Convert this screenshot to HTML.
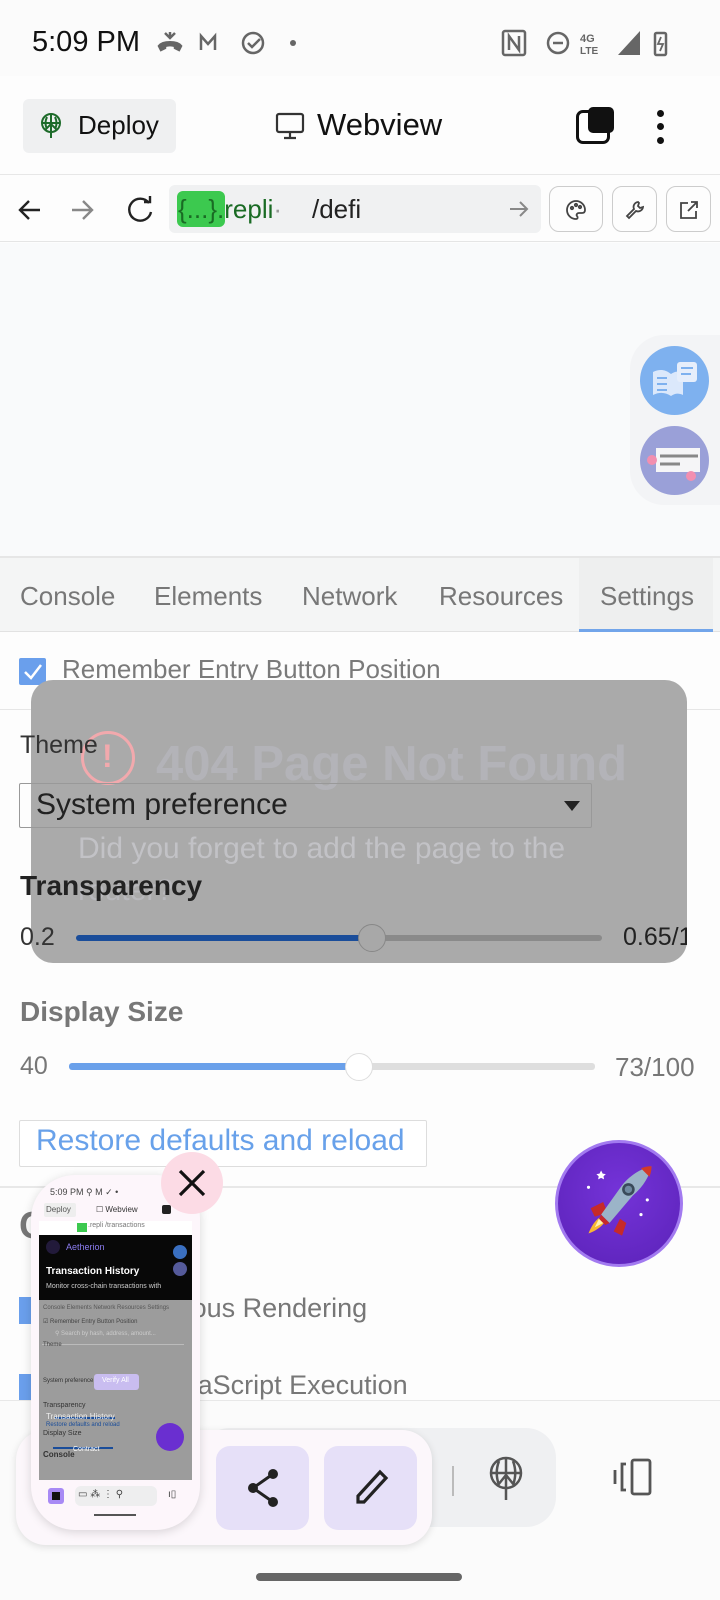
<!DOCTYPE html>
<html><head><meta charset="utf-8"><style>
*{box-sizing:border-box;margin:0;padding:0}
body{width:720px;height:1600px;position:relative;overflow:hidden;background:#fdfdfd;font-family:"Liberation Sans",sans-serif}
.a{position:absolute}
.t{position:absolute;white-space:nowrap}
</style></head><body>
<!-- status bar -->
<div class="a" style="left:0;top:0;width:720px;height:76px;background:#fbfbfb"></div>
<div class="t" style="left:32px;top:26px;font-size:29px;color:#111">5:09 PM</div>
<svg class="a" style="left:156px;top:28px" width="145" height="30" viewBox="0 0 145 30" fill="none" stroke="#666" stroke-width="2.5">
<path d="M3 18c4-5 18-5 22 0l-2 4-4-2v-2c-3-1-7-1-10 0v2l-4 2z" fill="#666"/><path d="M9 5l5 5 5-5M14 10V4"/>
<path d="M45 22V8l7 8 7-8v14"/>
<circle cx="97" cy="15" r="10"/><path d="M92 15l4 4 8-8"/>
<circle cx="137" cy="15" r="3" fill="#666" stroke="none"/></svg>
<svg class="a" style="left:500px;top:28px" width="175" height="30" viewBox="0 0 175 30" fill="none" stroke="#666" stroke-width="2.5">
<rect x="3" y="3" width="22" height="24" rx="2"/><path d="M9 22V8l10 14V8"/>
<circle cx="58" cy="15" r="10"/><path d="M53 15h10"/>
<text x="80" y="14" font-size="11" fill="#666" stroke="none" font-family="Liberation Sans" font-weight="bold">4G</text>
<text x="80" y="26" font-size="10" fill="#666" stroke="none" font-family="Liberation Sans" font-weight="bold">LTE</text>
<path d="M118 27L140 3v24z" fill="#666" stroke="none"/>
<rect x="155" y="5" width="11" height="22" rx="1.5"/><path d="M161 9l-3 7h5l-3 7" stroke-width="1.8"/></svg>
<!-- header -->
<div class="a" style="left:0;top:76px;width:720px;height:99px;background:#fdfdfd;border-bottom:1px solid #e7e7e7"></div>
<div class="a" style="left:23px;top:99px;width:153px;height:54px;background:#eff0f1;border-radius:6px"></div>
<svg class="a" style="left:38px;top:112px" width="26" height="28" viewBox="0 0 26 28" fill="none" stroke="#1d6b2a" stroke-width="2"><circle cx="13" cy="11" r="9"/><path d="M4 11h18M13 2v24M7 18l6-6 6 6M9 5c-2 4-2 8 0 12M17 5c2 4 2 8 0 12"/></svg>
<div class="t" style="left:78px;top:110px;font-size:26px;color:#111">Deploy</div>
<svg class="a" style="left:275px;top:112px" width="30" height="28" viewBox="0 0 30 28" fill="none" stroke="#333" stroke-width="2.2"><rect x="2" y="2" width="26" height="18" rx="2"/><path d="M15 20v5M9 26h12"/></svg>
<div class="t" style="left:317px;top:107px;font-size:31px;color:#111">Webview</div>
<div class="a" style="left:576px;top:110px;width:34px;height:34px;border:3px solid #111;border-radius:7px;background:#fff"></div>
<div class="a" style="left:588px;top:107px;width:26px;height:26px;background:#111;border-radius:5px"></div>
<div class="a" style="left:657px;top:110px;width:7px;height:7px;border-radius:50%;background:#111"></div>
<div class="a" style="left:657px;top:123px;width:7px;height:7px;border-radius:50%;background:#111"></div>
<div class="a" style="left:657px;top:137px;width:7px;height:7px;border-radius:50%;background:#111"></div>
<!-- url bar -->
<div class="a" style="left:0;top:176px;width:720px;height:66px;background:#fdfdfd;border-bottom:1px solid #e5e5e5"></div>
<svg class="a" style="left:16px;top:196px" width="140" height="28" viewBox="0 0 140 28" fill="none" stroke-width="2.4"><path d="M24 14H4M13 5l-9 9 9 9" stroke="#222"/><path d="M56 14h20M67 5l9 9-9 9" stroke="#888"/><path d="M133 7a11 11 0 1 0 2 9" stroke="#222"/><path d="M128 6h6V0" stroke="#222"/></svg>
<div class="a" style="left:169px;top:185px;width:372px;height:48px;background:#f0f1f2;border-radius:6px"></div>
<div class="a" style="left:177px;top:191px;width:48px;height:36px;background:#3cc94f;border-radius:6px"></div>
<div class="t" style="left:178px;top:194px;font-size:26px;color:#1a6b24">{...}<span>.repli</span><span style="color:#999">·</span></div>
<div class="t" style="left:312px;top:194px;font-size:26px;color:#222">/defi</div>
<svg class="a" style="left:508px;top:200px" width="22" height="18" viewBox="0 0 22 18" fill="none" stroke="#888" stroke-width="2"><path d="M2 9h17M12 2l7 7-7 7"/></svg>
<div class="a" style="left:549px;top:186px;width:54px;height:46px;border:1px solid #ccc;border-radius:10px"></div>
<div class="a" style="left:612px;top:186px;width:45px;height:46px;border:1px solid #ccc;border-radius:10px"></div>
<div class="a" style="left:666px;top:186px;width:45px;height:46px;border:1px solid #ccc;border-radius:10px"></div>
<svg class="a" style="left:565px;top:199px" width="22" height="22" viewBox="0 0 22 22" fill="none" stroke="#444" stroke-width="1.8"><path d="M11 2a9 9 0 0 0 0 18c2 0 2-2 1-3s0-3 2-3h3c2 0 3-1 3-3 0-5-4-9-9-9z"/><circle cx="7" cy="9" r="1.2"/><circle cx="11" cy="6" r="1.2"/><circle cx="15" cy="8" r="1.2"/></svg>
<svg class="a" style="left:624px;top:199px" width="22" height="22" viewBox="0 0 22 22" fill="none" stroke="#444" stroke-width="1.8"><path d="M14 3a5 5 0 0 0-4 7L3 17l2 2 7-7a5 5 0 0 0 7-4l-3 1-2-2 1-3z"/></svg>
<svg class="a" style="left:678px;top:199px" width="22" height="22" viewBox="0 0 22 22" fill="none" stroke="#444" stroke-width="1.8"><path d="M10 4H3v15h15v-7M13 3h6v6M19 3l-9 9"/></svg>
<!-- webview -->
<div class="a" style="left:0;top:243px;width:720px;height:313px;background:#f9fafb"></div>
<div class="a" style="left:630px;top:335px;width:100px;height:170px;background:#f3f4f6;border-radius:34px 0 0 34px"></div>
<div class="a" style="left:640px;top:346px;width:69px;height:69px;border-radius:50%;background:#7eb1ef"></div>
<svg class="a" style="left:651px;top:360px" width="48" height="42" viewBox="0 0 48 42"><path d="M2 12c6-3 12-3 18 2v22c-6-4-12-4-18-1z" fill="#dbe8fb"/><path d="M20 14c4-3 8-3 12-1v22c-4-2-8-2-12 1z" fill="#dbe8fb"/><rect x="26" y="2" width="20" height="20" rx="3" fill="#e6eefb"/><path d="M30 8h12M30 14h10M6 18h10M6 24h10M6 30h10" stroke="#7eb1ef" stroke-width="2"/></svg>
<div class="a" style="left:640px;top:426px;width:69px;height:69px;border-radius:50%;background:#9aa0d8"></div>
<svg class="a" style="left:644px;top:446px" width="62" height="40" viewBox="0 0 62 40"><rect x="12" y="2" width="44" height="24" fill="#f5f5f7"/><path d="M16 10h38M16 18h20" stroke="#888" stroke-width="3"/><circle cx="8" cy="14" r="5" fill="#f28fb0"/><circle cx="47" cy="30" r="5" fill="#f28fb0"/></svg>
<!-- tabs -->
<div class="a" style="left:0;top:556px;width:720px;height:76px;background:#f4f5f5;border-top:2px solid #e6e6e6;border-bottom:1px solid #e2e2e2"></div>
<div class="a" style="left:579px;top:558px;width:134px;height:74px;background:#eeefef;border-bottom:3px solid #72a5ea"></div>
<div class="t" style="left:20px;top:581px;font-size:26px;color:#777">Console</div>
<div class="t" style="left:154px;top:581px;font-size:26px;color:#777">Elements</div>
<div class="t" style="left:302px;top:581px;font-size:26px;color:#777">Network</div>
<div class="t" style="left:439px;top:581px;font-size:26px;color:#777">Resources</div>
<div class="t" style="left:600px;top:581px;font-size:26px;color:#777">Settings</div>
<!-- settings -->
<div class="a" style="left:19px;top:658px;width:27px;height:27px;background:#6a9fec;border-radius:2px"></div>
<svg class="a" style="left:22px;top:662px" width="22" height="20" viewBox="0 0 22 20" fill="none" stroke="#fff" stroke-width="2.5"><path d="M3 10l6 6L19 3"/></svg>
<div class="t" style="left:62px;top:654px;font-size:26px;color:#7a7a7a">Remember Entry Button Position</div>
<div class="a" style="left:0;top:709px;width:720px;height:1px;background:#e6e6e6"></div>
<!-- overlay -->
<div class="a" style="left:31px;top:680px;width:656px;height:283px;background:#aaaaaa;border-radius:22px"></div>
<div class="a" style="left:81px;top:731px;width:54px;height:54px;border:3px solid #f2a9ad;border-radius:50%"></div>
<div class="t" style="left:102px;top:738px;font-size:32px;color:#f2a9ad;font-weight:bold">!</div>
<div class="t" style="left:156px;top:736px;font-size:49px;color:#b3b3b8;font-weight:bold">404 Page Not Found</div>
<div class="t" style="left:78px;top:832px;font-size:30px;color:#c2c2c6">Did you forget to add the page to the</div>
<div class="t" style="left:78px;top:874px;font-size:30px;color:#b8b8bc">router?</div>
<div class="t" style="left:20px;top:731px;font-size:25px;color:#333">Theme</div>
<div class="a" style="left:19px;top:783px;width:573px;height:45px;border:1px solid #999;border-radius:2px"></div>
<div class="t" style="left:36px;top:788px;font-size:30px;color:#222">System preference</div>
<svg class="a" style="left:563px;top:800px" width="18" height="12"><path d="M1 1h16L9 11z" fill="#222"/></svg>
<div class="t" style="left:20px;top:870px;font-size:28px;color:#222;font-weight:bold">Transparency</div>
<div class="t" style="left:20px;top:923px;font-size:25px;color:#333">0.2</div>
<div class="a" style="left:76px;top:935px;width:296px;height:6px;background:#1a4d9a;border-radius:3px"></div>
<div class="a" style="left:372px;top:935px;width:230px;height:6px;background:#8a8a8a;border-radius:3px"></div>
<div class="a" style="left:358px;top:924px;width:28px;height:28px;border-radius:50%;background:#a8a8a8;border:1px solid #888"></div>
<div class="a" style="left:623px;top:920px;width:64px;height:34px;overflow:hidden"><div class="t" style="left:0;top:3px;font-size:25px;color:#222">0.65/1</div></div>
<div class="t" style="left:20px;top:996px;font-size:28px;color:#777;font-weight:bold">Display Size</div>
<div class="t" style="left:20px;top:1052px;font-size:25px;color:#777">40</div>
<div class="a" style="left:69px;top:1063px;width:289px;height:7px;background:#6aa0ea;border-radius:3px"></div>
<div class="a" style="left:358px;top:1063px;width:237px;height:7px;background:#dedede;border-radius:3px"></div>
<div class="a" style="left:345px;top:1053px;width:28px;height:28px;border-radius:50%;background:#fff;border:1px solid #ddd"></div>
<div class="t" style="left:615px;top:1052px;font-size:26px;color:#777">73/100</div>
<div class="a" style="left:19px;top:1120px;width:408px;height:47px;border:1px solid #ddd;border-radius:2px;background:#fff"></div>
<div class="t" style="left:36px;top:1124px;font-size:30px;color:#68a1ea">Restore defaults and reload</div>
<div class="a" style="left:0;top:1186px;width:720px;height:2px;background:#e8e8e8"></div>
<div class="t" style="left:19px;top:1205px;font-size:38px;color:#777;font-weight:bold">Console</div>
<div class="a" style="left:19px;top:1297px;width:27px;height:27px;background:#6a9fec"></div>
<div class="t" style="left:64px;top:1293px;font-size:27px;color:#777">Asynchronous Rendering</div>
<div class="a" style="left:19px;top:1374px;width:27px;height:27px;background:#6a9fec"></div>
<div class="t" style="left:64px;top:1370px;font-size:27px;color:#777">Enable JavaScript Execution</div>
<div class="a" style="left:0;top:1400px;width:720px;height:200px;background:#fbfbfb;border-top:1px solid #e8e8e8"></div>
<!-- bottom nav -->
<div class="a" style="left:200px;top:1428px;width:356px;height:99px;background:#eff0f2;border-radius:30px"></div>
<div class="a" style="left:452px;top:1466px;width:2px;height:30px;background:#bbb"></div>
<svg class="a" style="left:486px;top:1455px" width="40" height="48" viewBox="0 0 40 48" fill="none" stroke="#555" stroke-width="2.5"><circle cx="20" cy="18" r="15"/><path d="M5 18h30M20 3v42M12 30l8-10 8 10M13 6c-3 8-3 16 0 24M27 6c3 8 3 16 0 24"/></svg>
<svg class="a" style="left:612px;top:1458px" width="46" height="40" viewBox="0 0 46 40" fill="none" stroke="#555" stroke-width="2.8"><path d="M3 12v14M14 6h-4v26h4"/><rect x="20" y="2" width="18" height="34" rx="2"/></svg>
<div class="a" style="left:16px;top:1430px;width:416px;height:115px;background:#fcf7fb;border-radius:30px;box-shadow:0 2px 8px rgba(0,0,0,.12)"></div>
<div class="a" style="left:216px;top:1446px;width:93px;height:84px;background:#e6e0f8;border-radius:14px"></div>
<div class="a" style="left:324px;top:1446px;width:93px;height:84px;background:#e6e0f8;border-radius:14px"></div>
<svg class="a" style="left:245px;top:1468px" width="36" height="40" viewBox="0 0 36 40"><path d="M28 6L8 20l20 14" stroke="#222" stroke-width="3" fill="none"/><circle cx="28" cy="6" r="5" fill="#222"/><circle cx="8" cy="20" r="5" fill="#222"/><circle cx="28" cy="34" r="5" fill="#222"/></svg>
<svg class="a" style="left:354px;top:1468px" width="36" height="40" viewBox="0 0 36 40" fill="none" stroke="#222" stroke-width="3.2"><path d="M26 4l6 6L10 34H4v-6z"/></svg>
<div class="a" style="left:256px;top:1573px;width:206px;height:8px;background:#666;border-radius:4px"></div>
<!-- thumbnail -->
<div class="a" style="left:31px;top:1175px;width:169px;height:355px;background:#fdf6fb;border-radius:44px;box-shadow:0 2px 10px rgba(0,0,0,.15)"></div>
<div class="t" style="left:50px;top:1187px;font-size:9px;color:#444">5:09 PM ⚲ M ✓ •</div>
<div class="a" style="left:44px;top:1203px;width:32px;height:14px;background:#eee;border-radius:2px;font-size:8px;color:#555;padding:2px">Deploy</div>
<div class="t" style="left:96px;top:1205px;font-size:8px;color:#333">☐ Webview</div>
<div class="a" style="left:162px;top:1205px;width:9px;height:9px;background:#222;border-radius:2px"></div>
<div class="a" style="left:39px;top:1221px;width:153px;height:14px;background:#fff"></div>
<div class="a" style="left:77px;top:1223px;width:10px;height:9px;background:#3cc94f"></div>
<div class="t" style="left:88px;top:1222px;font-size:7px;color:#777">.repli /transactions</div>
<div class="a" style="left:39px;top:1235px;width:153px;height:65px;background:#080808"></div>
<div class="t" style="left:66px;top:1242px;font-size:9px;color:#8b7cf0">Aetherion</div>
<div class="a" style="left:46px;top:1240px;width:14px;height:14px;border-radius:50%;background:#221a3a"></div>
<div class="a" style="left:173px;top:1245px;width:14px;height:14px;border-radius:50%;background:#3a6fc0"></div>
<div class="a" style="left:173px;top:1262px;width:14px;height:14px;border-radius:50%;background:#555a9a"></div>
<div class="t" style="left:46px;top:1266px;font-size:10px;color:#fff;font-weight:bold">Transaction History</div>
<div class="t" style="left:46px;top:1283px;font-size:7px;color:#ccc">Monitor cross-chain transactions with</div>
<div class="a" style="left:39px;top:1300px;width:153px;height:180px;background:#9c9c9c"></div>
<div class="a" style="left:42px;top:1344px;width:142px;height:1px;background:#bbb"></div>
<div class="t" style="left:43px;top:1305px;font-size:6px;color:#555">Console  Elements  Network  Resources  Settings</div>
<div class="t" style="left:43px;top:1318px;font-size:6px;color:#444">☑ Remember Entry Button Position</div>
<div class="t" style="left:55px;top:1330px;font-size:6px;color:#ccc">⚲ Search by hash, address, amount...</div>
<div class="t" style="left:43px;top:1342px;font-size:6px;color:#444">Theme</div>
<div class="t" style="left:43px;top:1378px;font-size:6px;color:#333">System preference</div>
<div class="a" style="left:94px;top:1374px;width:45px;height:16px;background:#c9bdf0;border-radius:3px;font-size:7px;color:#fff;padding:3px 0 0 8px">Verify All</div>
<div class="t" style="left:43px;top:1402px;font-size:7px;color:#333">Transparency</div>
<div class="a" style="left:55px;top:1417px;width:60px;height:2px;background:#1a4d9a"></div>
<div class="t" style="left:46px;top:1412px;font-size:8px;color:#eee">Transaction History</div>
<div class="t" style="left:43px;top:1430px;font-size:7px;color:#333">Display Size</div>
<div class="a" style="left:53px;top:1447px;width:60px;height:2px;background:#1a4d9a"></div>
<div class="t" style="left:46px;top:1422px;font-size:6px;color:#1a4d9a">Restore defaults and reload</div>
<div class="a" style="left:156px;top:1423px;width:28px;height:28px;border-radius:50%;background:#6a2fd0"></div>
<div class="t" style="left:43px;top:1450px;font-size:8px;color:#333;font-weight:bold">Console</div>
<div class="t" style="left:73px;top:1446px;font-size:7px;color:#fff">Contract</div>
<div class="a" style="left:48px;top:1488px;width:16px;height:16px;background:#a88af5;border-radius:3px"></div>
<div class="a" style="left:52px;top:1492px;width:8px;height:8px;background:#111"></div>
<div class="a" style="left:75px;top:1486px;width:82px;height:20px;background:#eeeeef;border-radius:6px"></div>
<div class="t" style="left:78px;top:1489px;font-size:10px;color:#444">▭ ⁂ ⋮ ⚲</div>
<div class="t" style="left:168px;top:1489px;font-size:10px;color:#444">ı▯</div>
<div class="a" style="left:94px;top:1514px;width:42px;height:2px;background:#555"></div>
<!-- close -->
<div class="a" style="left:161px;top:1152px;width:62px;height:62px;border-radius:50%;background:#fcdbe5"></div>
<svg class="a" style="left:175px;top:1166px" width="34" height="34" viewBox="0 0 34 34" stroke="#111" stroke-width="3.2"><path d="M5 5l24 24M29 5L5 29"/></svg>
<!-- rocket -->
<div class="a" style="left:555px;top:1140px;width:128px;height:127px;border-radius:50%;background:radial-gradient(circle at 50% 40%,#7433d8,#5b22b8);border:3px solid #a27af0"></div>
<svg class="a" style="left:578px;top:1160px" width="84" height="84" viewBox="0 0 80 80"><path d="M24 40l-12 6 4 8 12-4z" fill="#c62a2a"/><path d="M40 56l-6 12 8 4 4-12z" fill="#c62a2a"/><path d="M22 54c-8 4-12 16-12 16s12-4 16-12z" fill="#f7b733"/><path d="M20 56l-4 8 8-4z" fill="#fff3b0"/><path d="M22 52L42 24C52 12 62 8 70 6c-2 8-6 18-18 28L30 60z" fill="#9bb4c8"/><path d="M60 8c5-2 8-2 10-2 0 2 0 5-2 10z" fill="#d23a2a"/><path d="M22 52l8 8-4 2-6-6z" fill="#c62a2a"/><circle cx="48" cy="28" r="6" fill="#3a4a5a"/><circle cx="48" cy="28" r="3.5" fill="#6f8aa0"/><path d="M22 10l1.5 3 3 .5-2.2 2 .5 3-2.8-1.5-2.8 1.5.5-3-2.2-2 3-.5z" fill="#fff"/><circle cx="10" cy="26" r="1.5" fill="#fff"/><circle cx="66" cy="38" r="1.5" fill="#fff"/><circle cx="60" cy="52" r="1.5" fill="#fff"/></svg>
</body></html>
